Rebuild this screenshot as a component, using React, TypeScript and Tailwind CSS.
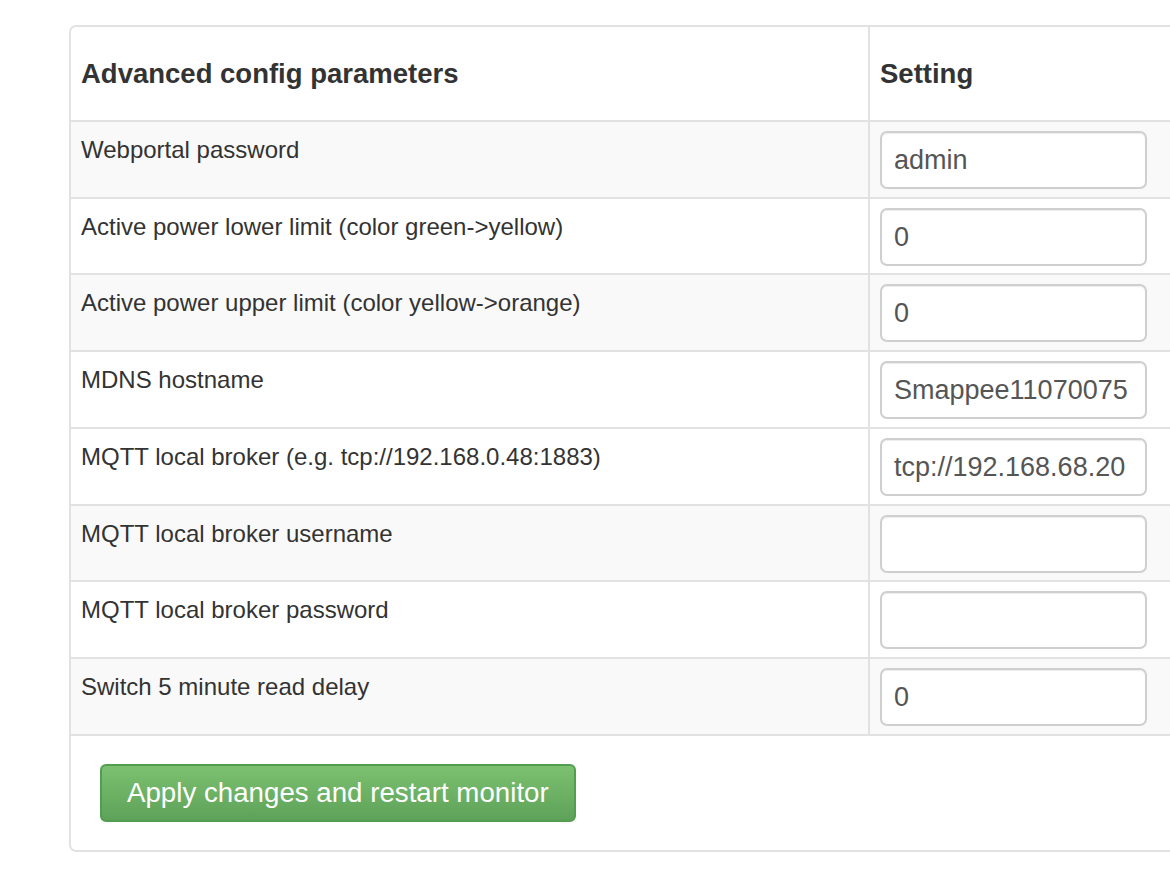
import React from 'react';

type Param = {
  label: string;
  value: string;
  striped: boolean;
  short?: boolean;
};

const params: Param[] = [
  { label: 'Webportal password', value: 'admin', striped: true },
  { label: 'Active power lower limit (color green->yellow)', value: '0', striped: false, short: true },
  { label: 'Active power upper limit (color yellow->orange)', value: '0', striped: true },
  { label: 'MDNS hostname', value: 'Smappee11070075', striped: false },
  { label: 'MQTT local broker (e.g. tcp://192.168.0.48:1883)', value: 'tcp://192.168.68.20', striped: false },
  { label: 'MQTT local broker username', value: '', striped: true, short: true },
  { label: 'MQTT local broker password', value: '', striped: false },
  { label: 'Switch 5 minute read delay', value: '0', striped: true },
];

const App: React.FC = () => {
  return (
    <div className="w-[1170px] h-[870px] overflow-hidden bg-white pt-[25px] pl-[69px] font-['Liberation_Sans',Arial,sans-serif] text-[#333]">
      <div className="w-[1140px] border-2 border-[#e2e2e2] rounded-l-[7px] bg-white">
        {/* header */}
        <div className="flex h-[95px] border-b-2 border-[#e2e2e2]">
          <div className="w-[799px] border-r-2 border-[#e2e2e2] pl-[10px] flex items-center text-[27.5px] font-bold leading-[38px]">
            Advanced config parameters
          </div>
          <div className="flex-1 pl-[10px] flex items-center text-[27.5px] font-bold leading-[38px]">Setting</div>
        </div>

        {params.map((p) => (
          <div
            key={p.label}
            className={`flex border-b-2 border-[#e2e2e2] ${p.short ? 'h-[76px]' : 'h-[77px]'} ${p.striped ? 'bg-[#f9f9f9]' : 'bg-white'}`}
          >
            <div className="w-[799px] border-r-2 border-[#e2e2e2] pl-[10px] pt-[11px] text-[24px] leading-[34px]">
              {p.label}
            </div>
            <div className="flex-1 pl-[10px] pt-[9px]">
              <input
                type="text"
                defaultValue={p.value}
                className="w-[267px] h-[58px] border-2 border-[#cfcfcf] rounded-[7px] bg-white px-[12px] text-[27px] text-[#555] shadow-[inset_0_1px_1px_rgba(0,0,0,0.075)] outline-none font-['Liberation_Sans',Arial,sans-serif]"
              />
            </div>
          </div>
        ))}

        <div className="pt-[28px] pb-[28px] pl-[29px]">
          <button className="h-[58px] px-[25px] rounded-[6px] border-2 border-[#539d50] bg-[#6cb163] bg-gradient-to-b from-[#7cc170] to-[#5ea25a] text-white text-[27.7px] leading-[34px] font-['Liberation_Sans',Arial,sans-serif]">
            Apply changes and restart monitor
          </button>
        </div>
      </div>
    </div>
  );
};

export default App;
